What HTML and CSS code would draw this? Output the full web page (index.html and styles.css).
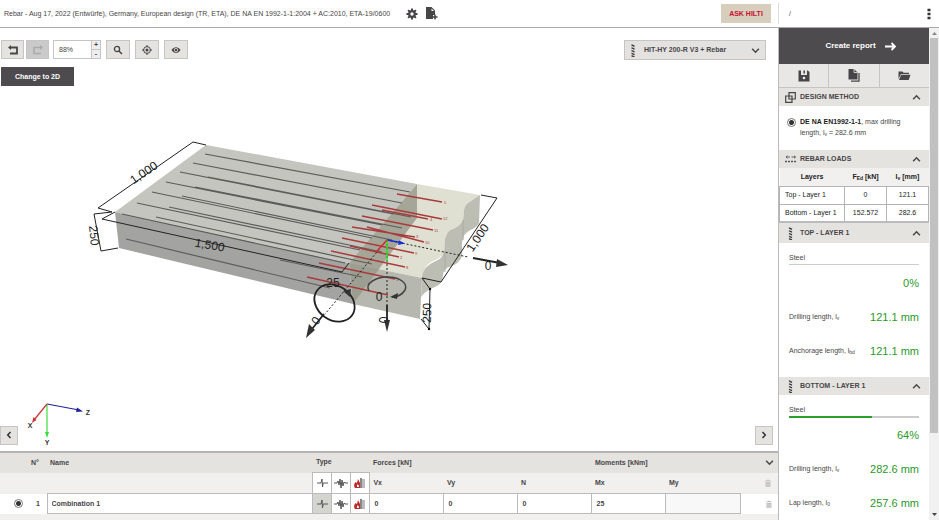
FILE: index.html
```html
<!DOCTYPE html>
<html lang="en">
<head>
<meta charset="utf-8">
<title>Rebar</title>
<link rel="stylesheet" href="styles.css">
</head>
<body>
<svg class="defs" aria-hidden="true">
  <symbol id="chev" viewBox="0 0 8 8"><path d="M1 2.500 4 5.500 7 2.500" fill="none" stroke="#4a484a" stroke-width="1.400"/></symbol>
  <symbol id="rebar" viewBox="0 0 8 14"><path d="M2.500 0v14M5.500 0v14" stroke="#bbb" stroke-width=".5"/><path d="M2.500 1l3 1.500M2.500 4l3 1.500M2.500 7l3 1.500M2.500 10l3 1.500M2.500 12.500l3 1.500" stroke="#333" stroke-width="1.400"/></symbol>
  <symbol id="pulse" viewBox="0 0 14 14"><path d="M2 7h4l1-4 .5 8 .7-4H13" fill="none" stroke="#555" stroke-width="1"/></symbol>
  <symbol id="seismic" viewBox="0 0 14 14"><path d="M0 7h3l1-2 1 4 1-6 1 9 1-8 1 6 1-4 1 1h3" fill="none" stroke="#555" stroke-width="1"/></symbol>
  <symbol id="fire" viewBox="0 0 14 14"><path d="M2 12C0 9 2 7 2.500 6L4 7l1-4 2 4v5z" fill="#c02a2a"/><path d="M4 9c1-1 2 0 2 2H4z" fill="#fff"/><path d="M8 2v10" stroke="#555" stroke-width="1.400"/><path d="M9 3h3v9H9z" fill="#bbb"/></symbol>
  <symbol id="trash" viewBox="0 0 8 10"><path d="M0 1.500h2.500V.5h3v1H8v1H0zM.7 3.500h6.600V10H.7z" fill="#bdbdbb"/><path d="M2.700 4.500v4M5.300 4.500v4" stroke="#eee" stroke-width=".8"/></symbol>
</svg>

<header class="topbar">
  <div class="project">
    <span>Rebar - Aug 17, 2022 (Entwürfe), Germany, European design (TR, ETA), DE NA EN 1992-1-1:2004 + AC:2010, ETA-19/0600</span>
    <button class="bare" aria-label="Settings"><svg width="12" height="12" viewBox="0 0 12 12"><path d="M6 .5v11M.5 6h11M2.100 2.100l7.800 7.800M9.900 2.100 2.100 9.900" stroke="#474547" stroke-width="2"/><circle cx="6" cy="6" r="2.800" fill="#fff" stroke="#474547" stroke-width="2.200"/></svg></button>
    <button class="bare" aria-label="Add document"><svg width="12" height="13" viewBox="0 0 12 13"><path d="M0 0h5.500L9 3.500V8H7v4H0z" fill="#474547"/><path d="M5.500 1.500V4H8z" fill="#fff"/><path d="M9 7.500v5M6.500 10h5" stroke="#474547" stroke-width="1.500"/></svg></button>
  </div>
  <button class="ask">ASK HILTI</button>
  <div class="crumb"><span>/</span>
    <button class="bare" aria-label="More"><svg width="4" height="12" viewBox="0 0 4 12"><path d="M.5.700h3v2.600h-3zM.5 4.700h3v2.600h-3zM.5 8.700h3v2.600h-3z" fill="#333"/></svg></button>
  </div>
</header>

<div class="shell">
<main class="work">
  <section class="canvas">
    <svg class="scene" viewBox="0 28 778 423" preserveAspectRatio="xMinYMin meet" role="img" aria-label="Rebar connection model">
      <path d="M206 145 417 184 349 263 115 212z" fill="#c4c5bf"/>
      <path d="M115 212 349 263 353 304 119 248z" fill="#a3a4a1"/>
      <path d="M417 184 480 195C474 200 473 200 471 201 462 206 465 210 463 220 458 230 449 228 447 234 443 240 446 248 443 254 438 262 426 260 424 272L422 278 349 263z" fill="#dfe0d2"/>
      <path d="M480 195 479 223C475 231 465 229 463 239 460 246 465 256 459 261 453 269 445 264 443 275 442 290 431 284 421 297L422 278C424 260 440 264 443 254 446 248 443 240 447 234 449 228 458 230 463 220 465 210 462 206 471 201z" fill="#bdbeb3"/>
      <path d="M463 220v20M445 251v21" stroke="#a7a89f" fill="none"/>
      <path d="M349 263 422 278 421 297 420 319 353 304z" fill="#b6b7ae"/>
      <path d="M417 184v34L353 304 349 263z" fill="#96978a" opacity=".8"/>
      <g stroke="#5c5d5a" stroke-width="1.200">
        <path d="M205 154 410 192M193 163 402 203M180 172 393 214M166 182 382 225M152 192 372 238M137 203 360 250M122 214 345 263M208 177 411 217M195 187 402 228M182 196 392 240M169 207 382 252M156 217 372 264M126 239 330 288"/>
        <path d="M280 260 362 277" />
      </g>
      <path d="M397 194 442 202M372 205 442 219M382 210 428 219M362 216 433 230M352 227 415 237M367 227 424 242M342 238 414 253M350 246 399 257M331 251 405 267M319 263 395 279M307 277 388 295" stroke="#a83c3c" stroke-width="1.500"/>
      <g class="mark"><text x="444" y="204">5</text><text x="443" y="220">12</text><text x="430" y="221">4</text><text x="434" y="232">11</text><text x="416" y="238">3</text><text x="425" y="244">10</text><text x="415" y="255">9</text><text x="400" y="259">2</text><text x="406" y="269">8</text><text x="396" y="281">1</text></g>
      <path d="M206 145 193 142 98 208 112 212 94 214 101 251 118 248M115 212 102 219 342 272 349 263M481 195 497 198 441 282 422 278 430 289 429 329 421 319" fill="none" stroke="#222"/>
      <path d="M387 240 468 257M387 240V305M387 240 325 314" stroke="#222" stroke-dasharray="2 2"/>
      <path d="M387 240 403 243" stroke="#1a2fd0" stroke-width="1.500"/><path d="M399 240.500 405 243.500 398 245z" fill="#1a2fd0"/>
      <path d="M387 240V261" stroke="#32e032" stroke-width="1.500"/>
      <path d="M387 240 376 252" stroke="#e02828" stroke-width="1.300"/>
      <path d="M473 258 500 263M387 305V322M324 314 312 329" stroke="#222" stroke-width="1.800"/>
      <path d="M497 259 508 265 496 267zM384 320h6l-3 12zM309 324l6 6-9 8z" fill="#333"/>
      <ellipse cx="334.500" cy="303" rx="21.500" ry="17" transform="rotate(35 334.500 303)" fill="none" stroke="#222" stroke-width="1.800"/>
      <path d="M343 291 351 289 350 297z" fill="#333"/>
      <path d="M369 291C364 283 377 277 387 277 401 277 408 284 405 290 402 295 398 297 392 297" fill="none" stroke="#444" stroke-width="1.500"/>
      <path d="M390 297 398 293 397 299z" fill="#333"/>
      <circle cx="430" cy="289" r="1.200"/><circle cx="429" cy="329" r="1.200"/>
      <g class="dim">
        <text transform="translate(146 176) rotate(-34)">1,000</text>
        <text transform="translate(209 249) rotate(10)">1,500</text>
        <text transform="translate(90 236) rotate(84)">250</text>
        <text transform="translate(481 240) rotate(-56)">1,000</text>
        <text transform="translate(431 313) rotate(-88)">250</text>
        <text x="333" y="287">25</text>
        <text x="379" y="301">0</text>
        <text x="488" y="270">0</text>
        <text transform="translate(388 320) rotate(-90)">0</text>
        <text transform="translate(319 323) rotate(-52)">0</text>
      </g>
      <path d="M47 404 79 410" stroke="#22229c" stroke-width="1.200"/><path d="M77 407.500 83 411.500 76 412z" fill="#22229c"/>
      <path d="M47 404V435" stroke="#3ddc3d" stroke-width="1.200"/><path d="M45 432h4l-2 6z" fill="#3ddc3d"/>
      <path d="M47 404 34 420" stroke="#c33" stroke-width="1.200"/><path d="M33.500 417l3 3-4.500 3z" fill="#c33"/>
      <g class="axis"><text x="88" y="415">Z</text><text x="30" y="428">X</text><text x="47" y="445">Y</text></g>
    </svg>

    <div class="tools">
      <div class="toolrow">
        <button class="tool" aria-label="Undo"><svg width="12" height="10" viewBox="0 0 12 10"><path d="M3 2.500h7v6H3" fill="none" stroke="#474547" stroke-width="1.800"/><path d="M4 0v5L1 2.500z" fill="#474547"/></svg></button>
        <button class="tool off" aria-label="Redo" disabled><svg width="12" height="10" viewBox="0 0 12 10"><path d="M9 2.500H2v6h7" fill="none" stroke="#aaa" stroke-width="1.600"/><path d="M8 0v5l3-2.500z" fill="#aaa"/></svg></button>
        <div class="zoom"><input type="text" value="88%" aria-label="Zoom"><div class="steps"><button aria-label="Zoom in">+</button><button aria-label="Zoom out">-</button></div></div>
        <button class="tool gap" aria-label="Search"><svg width="10" height="10" viewBox="0 0 10 10"><circle cx="4" cy="4" r="2.600" fill="none" stroke="#474547" stroke-width="1.300"/><path d="M6 6l3 3" stroke="#474547" stroke-width="1.500"/></svg></button>
        <button class="tool gap" aria-label="Center"><svg width="10" height="10" viewBox="0 0 10 10"><circle cx="5" cy="5" r="3.400" fill="none" stroke="#474547"/><circle cx="5" cy="5" r="1.600" fill="#474547"/><path d="M5 0v2M5 8v2M0 5h2M8 5h2" stroke="#474547"/></svg></button>
        <button class="tool gap" aria-label="Visibility"><svg width="10" height="8" viewBox="0 0 10 8"><path d="M.5 4C3 .2 7 .2 9.500 4 7 7.800 3 7.800.5 4z" fill="#474547"/><circle cx="5" cy="4" r="1.700" fill="#474547" stroke="#e4e3e0" stroke-width=".8"/></svg></button>
        <div class="product">
          <svg class="bar" width="8" height="13"><use href="#rebar"/></svg>
          <select aria-label="Product"><option>HIT-HY 200-R V3 + Rebar</option></select>
          <svg class="arrow" width="9" height="9"><use href="#chev"/></svg>
        </div>
      </div>
      <button class="dark">Change to 2D</button>
    </div>
    <div class="pager">
      <button aria-label="Previous"><svg width="6" height="8" viewBox="0 0 6 8"><path d="M4.500 1 1.700 4l2.800 3" fill="none" stroke="#333" stroke-width="1.500"/></svg></button>
      <button aria-label="Next"><svg width="6" height="8" viewBox="0 0 6 8"><path d="M1.500 1l2.800 3-2.800 3" fill="none" stroke="#333" stroke-width="1.500"/></svg></button>
    </div>
  </section>

  <section class="loads">
    <table class="combos">
      <colgroup><col class="c-pick"><col class="c-no"><col><col class="c-type"><col class="c-type"><col class="c-type"><col class="c-val"><col class="c-val"><col class="c-val"><col class="c-val"><col class="c-val"><col class="c-end"></colgroup>
      <thead>
        <tr class="head"><th></th><th>N°</th><th>Name</th><th colspan="3">Type</th><th colspan="3">Forces [kN]</th><th colspan="2">Moments [kNm]</th><th class="end"><svg width="9" height="9"><use href="#chev"/></svg></th></tr>
        <tr class="sub"><td colspan="3"></td>
          <td class="cell"><button aria-label="All static"><svg width="14" height="14"><use href="#pulse"/></svg></button></td>
          <td class="cell"><button aria-label="All seismic"><svg width="14" height="14"><use href="#seismic"/></svg></button></td>
          <td class="cell"><button aria-label="All fire"><svg width="14" height="14"><use href="#fire"/></svg></button></td>
          <th>Vx</th><th>Vy</th><th>N</th><th>Mx</th><th>My</th>
          <td class="end"><svg width="6" height="8"><use href="#trash"/></svg></td></tr>
      </thead>
      <tbody>
        <tr class="row"><td class="pick"><input type="radio" name="combo" aria-label="Combination 1" checked></td><td class="no">1</td>
          <td class="cell"><input type="text" aria-label="Name" value="Combination 1"></td>
          <td class="cell on"><button aria-label="Static"><svg width="14" height="14"><use href="#pulse"/></svg></button></td>
          <td class="cell"><button aria-label="Seismic"><svg width="14" height="14"><use href="#seismic"/></svg></button></td>
          <td class="cell"><button aria-label="Fire"><svg width="14" height="14"><use href="#fire"/></svg></button></td>
          <td class="cell"><input type="text" aria-label="Vx" value="0"></td>
          <td class="cell"><input type="text" aria-label="Vy" value="0"></td>
          <td class="cell"><input type="text" aria-label="N" value="0"></td>
          <td class="cell"><input type="text" aria-label="Mx" value="25"></td>
          <td class="cell empty"><input type="text" aria-label="My" value=""></td>
          <td class="end"><svg width="6" height="8"><use href="#trash"/></svg></td></tr>
      </tbody>
    </table>
  </section>
</main>

<aside class="side">
  <div class="panel">
    <button class="report">Create report <svg width="11" height="9" viewBox="0 0 11 9"><path d="M0 4.500h9.500M6.500 1l3.500 3.500L6.500 8" fill="none" stroke="#fff" stroke-width="1.800"/></svg></button>
    <div class="files">
      <button aria-label="Save"><svg width="12" height="12" viewBox="0 0 12 12"><path d="M.5.500H3V5h6V.500h.7L11.500 2v9.500H.5z" fill="#474547"/><path d="M5.500.500H7V3.500H5.500z" fill="#474547"/><circle cx="6" cy="8" r="1.300" fill="#eee"/></svg></button>
      <button aria-label="Copy"><svg width="12" height="13" viewBox="0 0 12 13"><path d="M.5 0H6l3.500 3.500V10.500h-9z" fill="#474547"/><path d="M6 0v3.500h3.500" fill="none" stroke="#eee" stroke-width=".8"/><path d="M11 4v8.200H3" fill="none" stroke="#474547" stroke-width="1.300"/></svg></button>
      <button aria-label="Open"><svg width="13" height="10" viewBox="0 0 13 10"><path d="M.5 8V.500h4l1 1.200H11V3H3z" fill="#474547"/><path d="M3.200 3.800H12.500L10.700 9H1z" fill="#474547"/></svg></button>
    </div>

    <h2><svg width="11" height="11" viewBox="0 0 11 11"><path d="M4 .7h6.300V7H4zM.7 4H7v6.300H.7z" fill="none" stroke="#474547" stroke-width="1.200"/></svg><span>DESIGN METHOD</span><svg class="up" width="9" height="9"><use href="#chev"/></svg></h2>
    <label class="method"><input type="radio" name="method" checked><span><b>DE NA EN1992-1-1</b>, max drilling length, l<sub>v</sub> = 282.6 mm</span></label>

    <h2><svg width="11" height="8" viewBox="0 0 11 8"><path d="M1 2h4M6.500 2h4M2.500.700 1 2l1.500 1.300M9 .7 10.500 2 9 3.300" fill="none" stroke="#555" stroke-width=".9"/><path d="M0 6.500h11" stroke="#555" stroke-width="1.500" stroke-dasharray="2 1"/></svg><span>REBAR LOADS</span><svg class="up" width="9" height="9"><use href="#chev"/></svg></h2>
    <table class="layers">
      <colgroup><col class="l-name"><col class="l-force"><col></colgroup>
      <thead><tr><th>Layers</th><th>F<sub>Ed</sub> [kN]</th><th>l<sub>v</sub> [mm]</th></tr></thead>
      <tbody><tr><td>Top - Layer 1</td><td>0</td><td>121.1</td></tr><tr><td>Bottom - Layer 1</td><td>152.572</td><td>282.6</td></tr></tbody>
    </table>

    <h2 class="ruled"><svg width="11" height="13" viewBox="0 0 8 14"><use href="#rebar"/></svg><span>TOP - LAYER 1</span><svg class="up" width="9" height="9"><use href="#chev"/></svg></h2>
    <div class="result">
      <label for="s1">Steel</label><progress class="idle" id="s1" max="100" value="0"></progress>
      <p><span></span><output>0%</output></p>
      <p><span>Drilling length, l<sub>v</sub></span><output>121.1 mm</output></p>
      <p><span>Anchorage length, l<sub>bd</sub></span><output>121.1 mm</output></p>
    </div>

    <h2><svg width="11" height="13" viewBox="0 0 8 14"><use href="#rebar"/></svg><span>BOTTOM - LAYER 1</span><svg class="up" width="9" height="9"><use href="#chev"/></svg></h2>
    <div class="result">
      <label for="s2">Steel</label><progress id="s2" max="100" value="64"></progress>
      <p><span></span><output>64%</output></p>
      <p><span>Drilling length, l<sub>v</sub></span><output>282.6 mm</output></p>
      <p><span>Lap length, l<sub>0</sub></span><output>257.6 mm</output></p>
    </div>
  </div>
  <div class="scroll"><svg width="5" height="3" viewBox="0 0 5 3"><path d="M0 3 2.500 0 5 3z" fill="#888"/></svg><i></i><svg width="5" height="3" viewBox="0 0 5 3"><path d="M0 0 2.500 3 5 0z" fill="#444"/></svg></div>
</aside>
</div>
</body>
</html>
```
FILE: styles.css
```css
* { box-sizing: border-box; }
body {
  margin: 0;
  height: 100vh;
  display: flex;
  flex-direction: column;
  overflow: hidden;
  background: #fff;
  color: #474547;
  font: 7px/10px "Liberation Sans", Arial, sans-serif;
}
button, input, select { font: inherit; color: inherit; margin: 0; border-radius: 0; }
button { padding: 0; border: 0; display: flex; align-items: center; justify-content: center; }
svg { display: block; flex: none; }
sub { font-size: 5px; line-height: 0; vertical-align: -1px; }
.defs { width: 0; height: 0; position: absolute; }
.bare { background: none; }

.topbar {
  flex: none;
  display: flex;
  align-items: center;
  height: 28px;
  border-bottom: 1px solid #aaa;
}
.project { flex: 1; display: flex; align-items: center; gap: 8px; padding-left: 4px; white-space: nowrap; }
.project .bare:first-of-type { margin-left: 8px; }
.ask {
  width: 50px;
  height: 19px;
  margin-right: 7px;
  background: #d7cebd;
  color: #c8102e;
  font-weight: bold;
}
.crumb {
  width: 161px;
  height: 21px;
  padding: 0 8px 0 10px;
  display: flex;
  align-items: center;
  justify-content: space-between;
  border-left: 1px solid #ddd;
}
.shell { flex: 1; min-height: 0; display: flex; }
.work { flex: 1; min-width: 0; display: flex; flex-direction: column; }

.canvas {
  flex: 1;
  min-height: 0;
  position: relative;
  display: flex;
  flex-direction: column;
  justify-content: space-between;
}
.scene { position: absolute; top: 0; left: 0; width: 100%; }
.dim { font-size: 12px; text-anchor: middle; fill: #222; }
.mark { font-size: 4px; fill: #a83c3c; }
.axis { font-size: 7px; font-weight: bold; text-anchor: middle; fill: #333; }
.tools { position: relative; padding: 12px 12px 0 1px; }
.toolrow { display: flex; align-items: flex-start; height: 27px; }
.tool, .pager button { height: 19px; background: #e4e3e0; border: 1px solid #c6c5c3; }
.tool { width: 23px; margin-right: 2px; }
.tool.gap { width: 24px; margin: 0 0 0 5px; }
.tool.off { background: #cacaca; }
.zoom { display: flex; width: 48px; height: 19px; margin-left: 2px; border: 1px solid #c6c5c3; }
.zoom input { flex: 1; min-width: 0; border: 0; padding: 0 5px; }
.steps { width: 9px; display: flex; flex-direction: column; border-left: 1px solid #c6c5c3; }
.steps button { flex: 1; background: #eee; line-height: 6px; font-weight: bold; }
.steps button + button { border-top: 1px solid #c6c5c3; }
.product { position: relative; width: 142px; height: 20px; margin-left: auto; }
.product select {
  appearance: none;
  width: 100%;
  height: 100%;
  padding: 0 20px 0 19px;
  border: 1px solid #c6c5c3;
  background: #e4e2e0;
  font-weight: bold;
}
.product svg { position: absolute; top: 4px; pointer-events: none; }
.bar { left: 5px; }
.product .arrow { right: 6px; top: 6px; }
.dark { width: 73px; height: 19px; background: #4d4b4e; color: #fff; font-weight: bold; }
.pager { position: relative; display: flex; justify-content: space-between; padding: 0 5px 6px 0; }
.pager button { width: 18px; }

.loads { flex: none; background: #f1f0ef; border-top: 2px solid #b4b4b4; padding-bottom: 6px; }
table { width: 100%; table-layout: fixed; border-collapse: collapse; }
th, td { padding: 0; text-align: left; }
.c-pick { width: 28px; } .c-no { width: 19px; } .c-type { width: 19px; } .c-val { width: 74px; } .c-end { width: 38px; }
.head { height: 20px; background: #e4e3df; }
.sub { height: 21px; }
.row { height: 20px; background: #fff; }
.combos th { padding-left: 3px; }
.combos .cell { border: 1px solid #bbb; }
.combos .cell.on { background: #d5d5d0; }
.combos .sub .cell { background: #fff; }
.combos .empty { background: #f8f8f8; }
.cell button { width: 100%; height: 17px; background: none; }
.cell input { display: block; width: 100%; height: 17px; border: 0; padding: 0 4px; background: none; font-weight: bold; }
.combos .end { padding-left: 25px; }
.no { font-weight: bold; }
.combos .no { padding-left: 8px; }
input[type="radio"] {
  appearance: none;
  flex: none;
  width: 9px;
  height: 9px;
  border: 1px solid #777;
  border-radius: 50%;
  background: radial-gradient(circle, #333 0 2px, #fff 3px);
}
.pick input { display: block; margin-left: 14px; }

.side { flex: none; width: 161px; display: flex; border-left: 1px solid #bbb; }
.panel { flex: 1; min-width: 0; overflow: hidden; }
.report { width: 100%; height: 36px; gap: 9px; padding-left: 13px; background: #4d4b4e; color: #fff; font-size: 8px; font-weight: bold; }
.files { display: flex; height: 24px; border-bottom: 1px solid #c6c5c3; }
.files button { flex: 1; background: #e8e7e5; }
.files button + button { border-left: 1px solid #c6c5c3; }
h2 { display: flex; align-items: center; gap: 4px; height: 18px; margin: 0; padding: 0 8px 0 6px; background: #e4e3e0; font-size: 7px; }
h2 span { flex: 1; }
.up { transform: rotate(180deg); }
.method { display: flex; gap: 4px; height: 44px; padding: 10px 20px 0 8px; line-height: 11px; }
.method input { margin-top: 2px; }
.method b { color: #222; }
.layers { border-bottom: 2px solid #bbb; color: #222; }
.layers th, .layers td { text-align: center; }
.layers td:first-child { text-align: left; padding-left: 5px; }
.l-name { width: 65px; } .l-force { width: 42px; }
.layers thead { background: #f1f0ef; }
.layers tr { height: 18px; }
.layers td { border: 1px solid #b4b4b4; }
.ruled { height: 20px; }
.result { height: 134px; padding: 10px 10px 0; }
.result label { display: block; height: 11px; }
progress { appearance: none; display: block; width: 100%; height: 2px; border: 0; }
progress::-webkit-progress-bar { background: #ccc; }
progress::-webkit-progress-value { background: #2ca02c; }
.result p { display: flex; align-items: center; justify-content: space-between; height: 34px; margin: 0; white-space: nowrap; }
.result .idle { height: 1px; margin-bottom: 1px; }
.result output { color: #2b982b; font-size: 11px; line-height: 14px; }
.scroll { width: 10px; padding: 4px 0; display: flex; flex-direction: column; align-items: center; background: #f1f1f1; }
.scroll i { width: 8px; height: 395px; margin: 3px 0 auto; background: #c1c1c1; }
```
